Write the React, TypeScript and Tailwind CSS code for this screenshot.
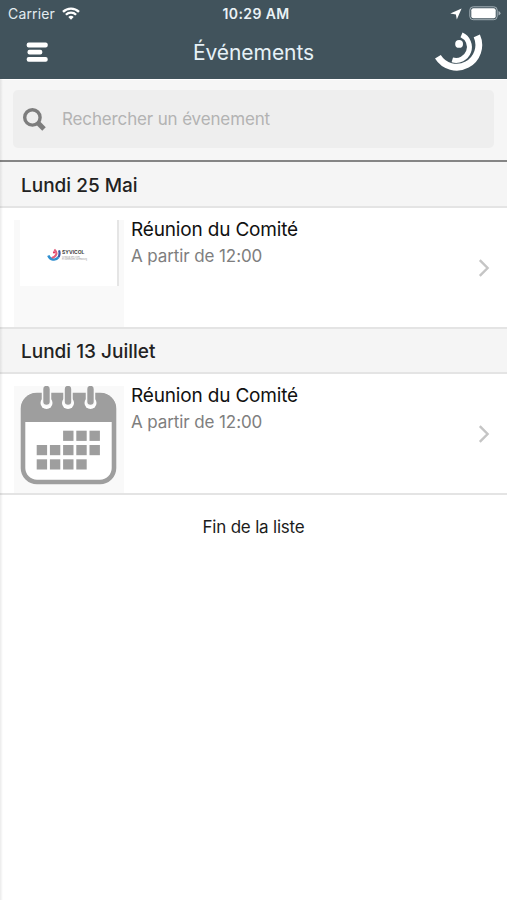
type EventItem = {
  day: string;
  title: string;
  time: string;
  thumb: "logo" | "calendar";
};

const EVENTS: EventItem[] = [
  { day: "Lundi 25 Mai", title: "Réunion du Comité", time: "A partir de 12:00", thumb: "logo" },
  { day: "Lundi 13 Juillet", title: "Réunion du Comité", time: "A partir de 12:00", thumb: "calendar" },
];

// Filled days of the calendar icon, as [column, row]
const DAYS = [
  [2, 0], [3, 0], [4, 0],
  [0, 1], [1, 1], [2, 1], [3, 1], [4, 1],
  [0, 2], [1, 2], [2, 2], [3, 2],
];

function WifiIcon() {
  return (
    <svg className="h-[13px] w-[18px]" viewBox="0 0 18 13" fill="none" stroke="#fff" strokeWidth="2.3" aria-hidden>
      <path d="M1 4.9a11.3 11.3 0 0 1 16 0" />
      <path d="M3.9 7.8a7.2 7.2 0 0 1 10.2 0" />
      <path d="M9 12.8 6.3 10.1a3.8 3.8 0 0 1 5.4 0z" fill="#fff" stroke="none" />
    </svg>
  );
}

function StatusBar() {
  return (
    <div className="grid h-[27px] grid-cols-3 items-center">
      <div className="flex items-center gap-[7px] pl-[8px] text-[14px] tracking-[0.15px] text-[#e3ecf1]">
        Carrier
        <WifiIcon />
      </div>
      <div className="pl-[5px] text-center text-[14px] font-semibold tracking-[0.4px] text-[#eaf2f6]">
        10:29 AM
      </div>
      <div className="flex items-center justify-end gap-[7px] pr-[6px]">
        <svg className="h-[12px] w-[12px]" viewBox="0 0 12 12" fill="#fff" aria-hidden>
          <path d="M11.6.5 6.8 11.6 5.9 6.4.3 5.6z" />
        </svg>
        <svg className="h-[15px] w-[32px]" viewBox="0 0 32 15" aria-hidden>
          <rect x=".8" y=".8" width="27.4" height="12.9" rx="3.4" fill="none" stroke="#a3b0b7" />
          <rect x="2.3" y="2.3" width="24.4" height="9.9" rx="2" fill="#fff" />
          <path d="M29.5 5v4.6q2-.8 2-2.3T29.5 5z" fill="#a3b0b7" />
        </svg>
      </div>
    </div>
  );
}

function BrandMark() {
  return (
    <svg className="h-[44px] w-[52px]" viewBox="432 30 52 44" fill="none" stroke="#fff" aria-hidden>
      <path d="M437.9 56.7A22.1 22.1 0 0 0 476.8 35.9" strokeWidth="6.8" />
      <path d="M461.5 34.9A13.3 13.3 0 0 1 452.3 59.8" strokeWidth="5" />
      <circle cx="459.1" cy="43.9" r="3.9" fill="#fff" stroke="none" />
    </svg>
  );
}

function Header() {
  return (
    <header className="h-[79px] bg-[#41535c]">
      <StatusBar />
      <div className="grid h-[52px] grid-cols-[72px_1fr_72px]">
        <button type="button" className="flex items-start pl-[26px] pt-[15px]" aria-label="Menu">
          <svg className="h-[20px] w-[22px]" viewBox="0 0 22 20" fill="#fff" aria-hidden>
            <rect x=".7" y=".6" width="21" height="4.8" rx="2" />
            <rect x="1.5" y="7.8" width="14.8" height="4.6" rx="2" />
            <rect x=".7" y="15" width="21" height="4.8" rx="2" />
          </svg>
        </button>
        <h1 className="pt-[10px] text-center text-[21px] leading-[32px] tracking-[-0.05px] text-[#e6f1f7]">
          Événements
        </h1>
        <div className="-ml-[3px] pt-[3px]">
          <BrandMark />
        </div>
      </div>
    </header>
  );
}

function SearchBar() {
  return (
    <div className="h-[83px] border-b-2 border-[#858585] border-t border-t-[#fff] bg-[#f6f6f6] px-[13px] pt-[10px]">
      <div className="flex h-[58px] items-center rounded-[5px] bg-[#eee] pl-[10px]">
        <svg className="h-[23px] w-[23px]" viewBox="0 0 23 23" fill="none" stroke="#7d7d7d" aria-hidden>
          <circle cx="9.4" cy="9.4" r="7.7" strokeWidth="3.4" />
          <path d="m14.8 14.8 6.2 6.2" strokeWidth="5" />
        </svg>
        <span className="ml-[16px] pt-px text-[17px] tracking-[-0.14px] text-[#b3b3b3]">
          Rechercher un évenement
        </span>
      </div>
    </div>
  );
}

function CalendarIcon() {
  return (
    <svg className="h-[100px] w-[110px]" viewBox="0 0 110 100" aria-hidden>
      <rect x="9" y="9" width="91" height="87" rx="14" fill="#fff" stroke="#9e9e9e" strokeWidth="4.6" />
      <path d="M7 36V22A15.5 15.5 0 0 1 22 7H87a15.5 15.5 0 0 1 15 15V36z" fill="#9e9e9e" />
      {[32.5, 54, 76.5].map((x) => (
        <g key={x} strokeLinecap="round">
          <circle cx={x} cy="17" r="6" fill="#fff" />
          <path d={`M${x} 4V16`} stroke="#fafafa" strokeWidth="9.5" />
          <path d={`M${x} 3V15.5`} stroke="#9e9e9e" strokeWidth="6.4" />
        </g>
      ))}
      {DAYS.map(([col, row]) => (
        <rect
          key={`${col}-${row}`}
          x={22.7 + col * 13.2}
          y={44.7 + row * 14.3}
          width="10.4"
          height="10.2"
          fill="#9e9e9e"
        />
      ))}
    </svg>
  );
}

function LogoThumb() {
  return (
    <div className="ml-[6px] flex h-[66px] w-[99px] items-center border-r-2 border-[#e5e5e5] bg-white pl-[27px] pt-[3px]">
      <svg className="h-[13px] w-[14px]" viewBox="0 0 14 13" fill="none" aria-hidden>
        <path d="M1.3 7.5C3 12 8.6 13 11.4 9.3" stroke="#2f8fd0" strokeWidth="2.4" />
        <path d="M11.4 9.3Q13.4 6 12 2.4" stroke="#3a57a6" strokeWidth="2.2" />
        <path d="M7.3 1.5Q10.8 4.7 8.6 7.5T5 9" stroke="#e2607c" strokeWidth="2.1" />
        <circle cx="7" cy="4.4" r="1.1" fill="#e0355f" />
      </svg>
      <div className="ml-px">
        <div className="text-[5px] font-bold leading-[5px] text-[#454545]">SYVICOL</div>
        <div className="mt-px text-[2px] leading-[2px] text-[#999]">Syndicat des Villes</div>
        <div className="text-[2px] leading-[2px] text-[#999]">et Communes luxembourg</div>
      </div>
    </div>
  );
}

function EventRow({ event }: { event: EventItem }) {
  return (
    <section>
      <h2 className="h-[46px] border-b-2 border-[#e4e4e4] bg-[#f5f5f5] pl-[21px] text-[19px] font-medium leading-[47px] text-[#222]">
        {event.day}
      </h2>
      <div className="relative -mb-px flex h-[121px] border-b-2 border-[#e4e4e4] bg-white pl-[14px]">
        <div className="mt-[12px] w-[110px] bg-[#f9f9f9]">
          {event.thumb === "logo" ? <LogoThumb /> : <CalendarIcon />}
        </div>
        <div className="flex-1 pl-[7px] pt-[9px]">
          <div className="text-[19px] leading-[26px] tracking-[-0.17px] text-[#111]">{event.title}</div>
          <div className="text-[17px] leading-[26px] tracking-[-0.1px] text-[#7e7e7e]">{event.time}</div>
        </div>
        <svg className="mr-[17px] mt-[51px] h-[18px] w-[12px]" viewBox="0 0 12 18" fill="none" stroke="#c5c5c5" strokeWidth="2.4" aria-hidden>
          <path d="m1.8 1.2 7.8 7.8-7.8 7.8" />
        </svg>
      </div>
    </section>
  );
}

export default function App() {
  return (
    <div className="flex min-h-[900px] w-[507px] flex-col bg-white font-['Inter',sans-serif]">
      <Header />
      <main className="relative flex-1">
        <SearchBar />
        {EVENTS.map((event) => (
          <EventRow key={event.day} event={event} />
        ))}
        <p className="pt-[20px] text-center text-[17px] leading-[26px] tracking-[-0.2px] text-[#1c1c1c]">
          Fin de la liste
        </p>
        <div className="pointer-events-none absolute inset-y-0 left-0 w-[3px] bg-gradient-to-r from-black/8 to-transparent" />
      </main>
    </div>
  );
}
